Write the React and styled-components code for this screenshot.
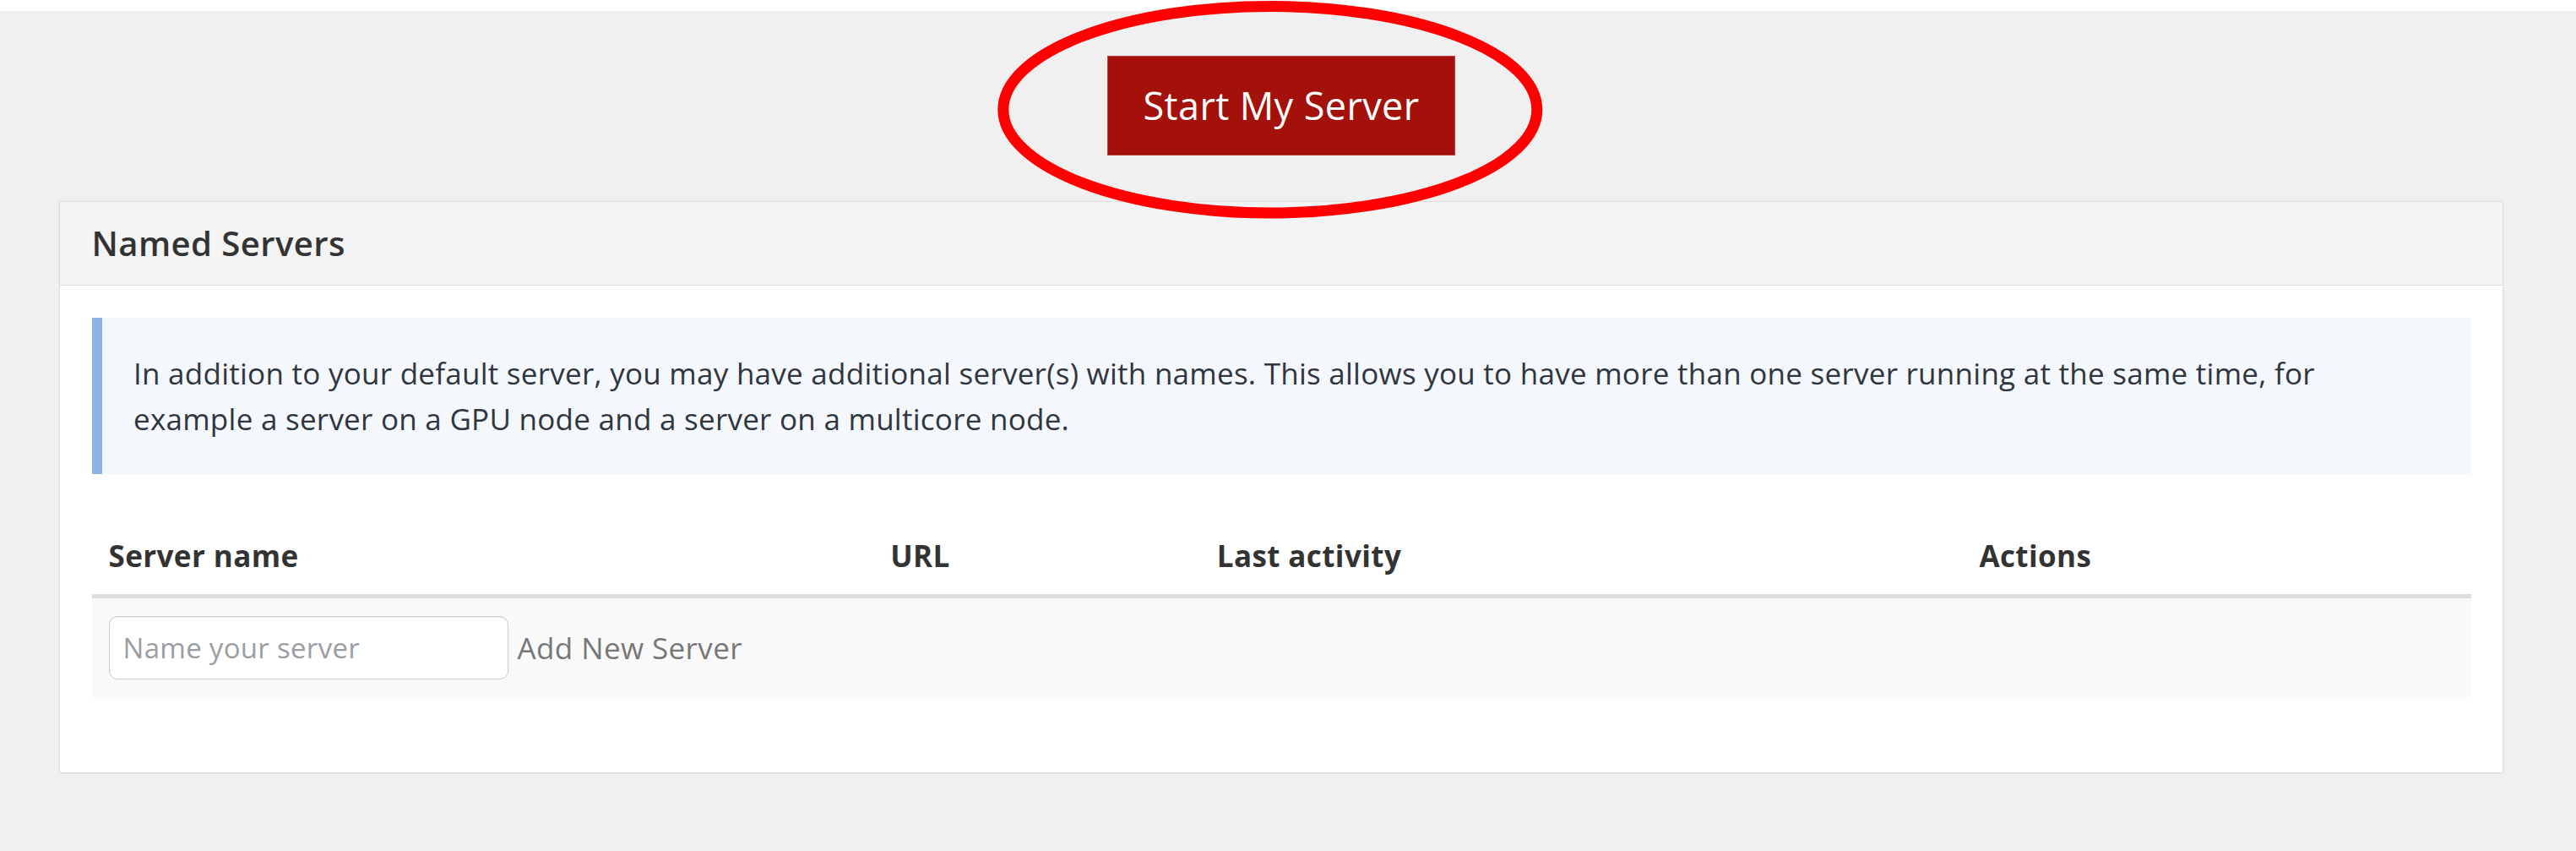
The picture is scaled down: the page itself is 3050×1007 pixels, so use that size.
import React from 'react'
import styled, { createGlobalStyle } from 'styled-components'

const GlobalStyle = createGlobalStyle`
  html, body {
    margin: 0;
    padding: 0;
  }
  body {
    background: #f0f0f0;
    font-family: "Open Sans", "Noto Sans", "Liberation Sans", sans-serif;
    color: #333;
    -webkit-font-smoothing: antialiased;
  }
  * {
    box-sizing: border-box;
  }
`

const columns = [
  { title: 'Server name', width: 925.5 },
  { title: 'URL', width: 386.5 },
  { title: 'Last activity', width: 902.5 },
  { title: 'Actions', width: 602 },
]

export default function App() {
  return (
    <Page>
      <GlobalStyle />
      <TopStrip />
      <Main>
        <StartRow>
          <StartButton type="button">Start My Server</StartButton>
        </StartRow>
        <Panel>
          <PanelHeading>
            <PanelTitle>Named Servers</PanelTitle>
          </PanelHeading>
          <PanelBody>
            <Callout>
              In addition to your default server, you may have additional
              server(s) with names. This allows you to have more than one
              server running at the same time, for example a server on a GPU
              node and a server on a multicore node.
            </Callout>
            <ServerTable>
              <colgroup>
                {columns.map(({ title, width }) => (
                  <Col key={title} $width={width} />
                ))}
              </colgroup>
              <thead>
                <tr>
                  {columns.map(({ title }) => (
                    <HeadCell key={title}>{title}</HeadCell>
                  ))}
                </tr>
              </thead>
              <tbody>
                <StripedRow>
                  <Cell colSpan={4}>
                    <AddServer>
                      <NameInput type="text" placeholder="Name your server" />
                      <AddLink href="#">Add New Server</AddLink>
                    </AddServer>
                  </Cell>
                </StripedRow>
              </tbody>
            </ServerTable>
          </PanelBody>
        </Panel>
      </Main>
      <Highlight width="660" height="265" viewBox="0 0 660 265">
        <ellipse
          cx="328.8"
          cy="129.7"
          rx="316"
          ry="122.3"
          fill="none"
          stroke="#ff0000"
          strokeWidth="13"
        />
      </Highlight>
    </Page>
  )
}

const Page = styled.div`
  position: relative;
  min-height: 1007px;
  background: #f0f0f0;
`

const TopStrip = styled.div`
  height: 13px;
  background: #ffffff;
`

const Main = styled.main`
  padding: 53px 86px 0 70px;
`

const StartRow = styled.div`
  display: flex;
  justify-content: center;
  margin-bottom: 54px;
`

const StartButton = styled.button`
  display: inline-flex;
  align-items: center;
  justify-content: center;
  height: 118px;
  padding: 0 41px;
  border: 1px solid #b9423e;
  border-radius: 0;
  background: #a4110b;
  color: #ffffff;
  font-family: inherit;
  font-size: 45px;
  letter-spacing: 0.4px;
  line-height: 60px;
  cursor: pointer;
`

const Highlight = styled.svg`
  position: absolute;
  left: 1175px;
  top: 0;
  pointer-events: none;
`

const Panel = styled.section`
  background: #ffffff;
  border: 1px solid #dddddd;
  box-shadow: 0 1px 2px rgba(0, 0, 0, 0.05);
`

const PanelHeading = styled.header`
  padding: 25px 37.5px;
  background: #f4f4f4;
  border-bottom: 1px solid #dddddd;
`

const PanelTitle = styled.h3`
  margin: 0;
  font-size: 40px;
  font-weight: 600;
  letter-spacing: 0.45px;
  line-height: 48px;
  color: #333;
`

const PanelBody = styled.div`
  padding: 38px 37.5px 37.5px;
`

const Callout = styled.p`
  margin: 0 0 50px;
  padding: 38.5px 70px 38.5px 37.5px;
  background: #f4f7fb;
  border-left: 12.5px solid #8db3e6;
  font-size: 35px;
  letter-spacing: 0.26px;
  line-height: 54px;
  color: #2f3640;
`

const ServerTable = styled.table`
  width: 100%;
  table-layout: fixed;
  border-collapse: collapse;
  border-spacing: 0;
  margin-bottom: 51px;
`

const Col = styled.col`
  width: ${({ $width }) => $width}px;
`

const HeadCell = styled.th`
  padding: 21px 20px 20px;
  text-align: left;
  font-size: 35px;
  font-weight: 700;
  letter-spacing: 0.4px;
  line-height: 51px;
  color: #333;
  border-bottom: 5px solid #dddddd;
`

const StripedRow = styled.tr`
  background: #f9f9f9;
`

const Cell = styled.td`
  padding: 20px;
`

const AddServer = styled.div`
  display: flex;
  align-items: center;
  gap: 11px;
  height: 77px;
`

const NameInput = styled.input`
  width: 473px;
  height: 75px;
  padding: 0 16px;
  border: 1px solid #cccccc;
  border-radius: 10px;
  background: #ffffff;
  box-shadow: inset 0 1px 1px rgba(0, 0, 0, 0.075);
  font-family: inherit;
  font-size: 33px;
  letter-spacing: 0.3px;
  color: #555;
  outline: none;

  &::placeholder {
    color: #9a9ea3;
  }
`

const AddLink = styled.a`
  font-size: 35px;
  letter-spacing: 0.4px;
  color: #777777;
  text-decoration: none;
`
